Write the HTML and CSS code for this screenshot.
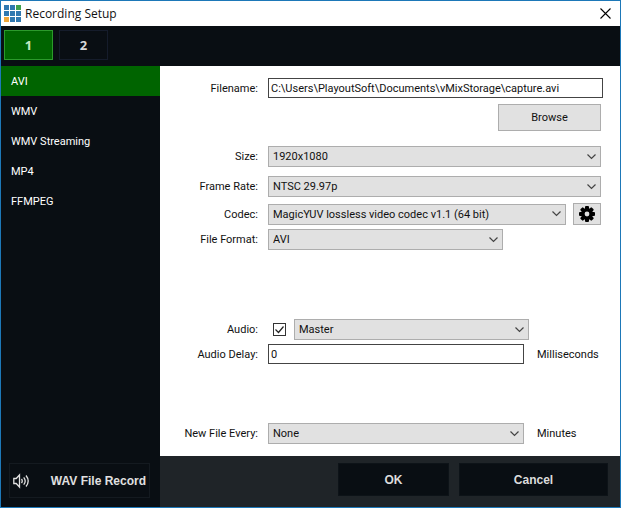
FILE: index.html
```
<!DOCTYPE html>
<html lang="en">
<head>
    <meta charset="UTF-8">
    <meta name="viewport" content="width=device-width, initial-scale=1.0">
    <title>Recording Setup</title>
    <link rel="stylesheet" href="styles.css">
</head>
<body>

<div class="window">
    <header class="titlebar">
        <svg class="logo" width="17" height="17" viewBox="0 0 17 17">
            <path fill="#2f78b0" d="M0 0h5v5H0zM6 0h5v5H6zM0 6h5v5H0zM6 6h5v5H6zM12 6h5v5h-5zM6 12h5v5H6zM12 12h5v5h-5z"/>
            <path fill="#3fa04c" d="M12 0h5v5h-5z"/>
            <path fill="#efa73a" d="M0 12h5v5H0z"/>
        </svg>
        <h1>Recording Setup</h1>
        <button class="close" aria-label="Close">
            <svg width="11" height="11" viewBox="0 0 11 11"><path d="M.5.5l10 10M10.500.5l-10 10" fill="none" stroke="#000" stroke-width="1.100"/></svg>
        </button>
    </header>

    <nav class="tabs">
        <button class="tab active">1</button>
        <button class="tab">2</button>
    </nav>

    <div class="main">
        <aside class="sidebar">
            <button class="format active">AVI</button>
            <button class="format">WMV</button>
            <button class="format">WMV Streaming</button>
            <button class="format">MP4</button>
            <button class="format">FFMPEG</button>
            <button class="wav">
                <svg width="17" height="16" viewBox="0 0 17 16" fill="none" stroke="#e0e0e0" stroke-width="1.300">
                    <path d="M.8 5.500h2.400L6.500 2v12L3.200 10.500H.8z"/>
                    <path d="M8.500 6q1.500 2 0 4M10.700 4.300q3 3.700 0 7.400M13 2.500q4.400 5.500 0 11"/>
                </svg>
                <span>WAV File Record</span>
            </button>
        </aside>

        <div class="content">
            <form class="form">
                <div class="row row-file">
                    <label for="filename">Filename:</label>
                    <input type="text" id="filename" class="grow" value="C:\Users\PlayoutSoft\Documents\vMixStorage\capture.avi">
                </div>
                <div class="row row-browse">
                    <button type="button" class="browse">Browse</button>
                </div>
                <div class="row row-size">
                    <label for="size">Size:</label>
                    <select id="size" class="grow"><option>1920x1080</option></select>
                </div>
                <div class="row row-rate">
                    <label for="rate">Frame Rate:</label>
                    <select id="rate" class="grow"><option>NTSC 29.97p</option></select>
                </div>
                <div class="row row-codec">
                    <label for="codec">Codec:</label>
                    <select id="codec" class="grow"><option>MagicYUV lossless video codec v1.1 (64 bit)</option></select>
                    <button type="button" class="gear" aria-label="Codec settings">
                        <svg width="16" height="16" viewBox="0 0 16 16">
                            <g fill="#000">
                                <rect x="6" y="0" width="4" height="16" rx="1"/>
                                <rect x="6" y="0" width="4" height="16" rx="1" transform="rotate(45 8 8)"/>
                                <rect x="6" y="0" width="4" height="16" rx="1" transform="rotate(90 8 8)"/>
                                <rect x="6" y="0" width="4" height="16" rx="1" transform="rotate(135 8 8)"/>
                                <circle cx="8" cy="8" r="6"/>
                            </g>
                            <circle cx="8" cy="8" r="2.400" fill="#e1e1e1"/>
                        </svg>
                    </button>
                </div>
                <div class="row row-format">
                    <label for="format">File Format:</label>
                    <select id="format" class="medium"><option>AVI</option></select>
                </div>
                <div class="row row-audio">
                    <label for="audio">Audio:</label>
                    <input type="checkbox" id="audio" checked>
                    <select class="medium" aria-label="Audio source"><option>Master</option></select>
                </div>
                <div class="row row-delay">
                    <label for="delay">Audio Delay:</label>
                    <input type="text" id="delay" class="wide" value="0">
                    <span class="unit">Milliseconds</span>
                </div>
                <div class="row row-every">
                    <label for="every">New File Every:</label>
                    <select id="every" class="wide"><option>None</option></select>
                    <span class="unit">Minutes</span>
                </div>
            </form>

            <footer class="footer">
                <button class="ok">OK</button>
                <button class="cancel">Cancel</button>
            </footer>
        </div>
    </div>
</div>

</body>
</html>
```
FILE: styles.css
```
* {
    box-sizing: border-box;
}
body {
    margin: 0;
    font-family: Roboto, "Liberation Sans", sans-serif;
    font-size: 11px;
    color: #111;
}
button, input, select {
    font: inherit;
    color: inherit;
    margin: 0;
    padding: 0;
    border-radius: 0;
}
.window {
    display: flex;
    flex-direction: column;
    min-height: 100vh;
    border: 1px solid #1d78b8;
    background: #fff;
}

/* title bar */
.titlebar {
    display: flex;
    align-items: center;
    height: 25px;
    padding: 0 9px 0 3px;
}
.titlebar h1 {
    flex: 1;
    margin: 0 0 0 4px;
    font-family: "Open Sans", "Noto Sans", sans-serif;
    font-size: 12px;
    font-weight: normal;
}
.close {
    display: flex;
    border: 0;
    background: none;
}

/* tabs */
.tabs {
    display: flex;
    gap: 6px;
    height: 40px;
    padding: 4px 3px;
    background: #090e13;
}
.tab {
    width: 49px;
    height: 30px;
    border: 1px solid #151c2b;
    background: #090e13;
    color: #d8d8d8;
    font-family: "Open Sans", "Noto Sans", sans-serif;
    font-size: 13px;
    font-weight: bold;
}
.tab.active {
    border-color: #2c9a2c;
    background: #006400;
    color: #c4e8c4;
}

.main {
    display: flex;
    flex: 1;
}

/* sidebar */
.sidebar {
    display: flex;
    flex: none;
    flex-direction: column;
    width: 159px;
    padding-bottom: 9px;
    background: #090e13;
}
.format {
    height: 30px;
    padding-left: 10px;
    border: 0;
    background: none;
    color: #fff;
    text-align: left;
}
.format.active {
    background: #006400;
}
.wav {
    display: flex;
    align-items: center;
    justify-content: space-between;
    height: 35px;
    margin: auto 10px 0 8px;
    padding: 0 3px;
    border: 1px solid #141a20;
    background: none;
    color: #e0e0e0;
    font-family: "Liberation Sans", Arial, sans-serif;
    font-size: 12px;
    font-weight: bold;
}

/* form */
.content {
    display: flex;
    flex: 1;
    flex-direction: column;
    min-width: 0;
}
.form {
    flex: 1;
    padding: 12px 19px 12px 0;
}
.row {
    display: flex;
    align-items: center;
}
.row label {
    flex: none;
    width: 98px;
    margin-right: 10px;
    text-align: right;
}
.row-file {
    margin-right: -2px;
}
.row-browse {
    justify-content: flex-end;
    margin-top: 6px;
}
.row-size {
    margin-top: 15px;
}
.row-rate {
    margin-top: 9px;
}
.row-codec {
    margin-top: 6px;
}
.row-format {
    margin-top: 4px;
}
.row-audio {
    margin-top: 69px;
}
.row-delay {
    margin-top: 4px;
}
.row-every {
    margin-top: 59px;
}
.grow {
    flex: 1;
    min-width: 0;
}
.medium {
    width: 235px;
}
.wide {
    width: 256px;
}
input[type="text"] {
    height: 20px;
    padding: 0 2px;
    border: 1px solid #444;
    background: #fff;
}
select {
    height: 21px;
    padding: 0 20px 0 4px;
    border: 1px solid #adadad;
    appearance: none;
    background: #e1e1e1 url("data:image/svg+xml,%3Csvg xmlns='http://www.w3.org/2000/svg' width='9' height='6'%3E%3Cpath d='M.5.5l4 4 4-4' fill='none' stroke='%23444' stroke-width='1.200'/%3E%3C/svg%3E") no-repeat right 4px center;
}
input[type="checkbox"] {
    width: 13px;
    height: 13px;
    margin: 0 8px 0 5px;
    border: 1px solid #333;
    appearance: none;
}
input[type="checkbox"]:checked {
    background: url("data:image/svg+xml,%3Csvg xmlns='http://www.w3.org/2000/svg' width='11' height='11'%3E%3Cpath d='M1.500 5.500l3 3 5-6' fill='none' stroke='%23222' stroke-width='1.200'/%3E%3C/svg%3E") no-repeat center;
}
.browse {
    width: 103px;
    height: 27px;
    border: 1px solid #adadad;
    background: #e1e1e1;
}
.gear {
    display: flex;
    align-items: center;
    justify-content: center;
    width: 28px;
    height: 22px;
    margin-left: 7px;
    border: 1px solid #adadad;
    background: #e1e1e1;
}
.unit {
    margin-left: 13px;
}

/* footer */
.footer {
    display: flex;
    justify-content: flex-end;
    gap: 10px;
    padding: 7px 12px 11px;
    background: #1f2428;
}
.footer button {
    height: 33px;
    border: 1px solid #0d1318;
    background: #090e13;
    color: #dcdcdc;
    font-family: "Liberation Sans", Arial, sans-serif;
    font-size: 12px;
    font-weight: bold;
}
.ok {
    width: 111px;
}
.cancel {
    width: 149px;
}
```
